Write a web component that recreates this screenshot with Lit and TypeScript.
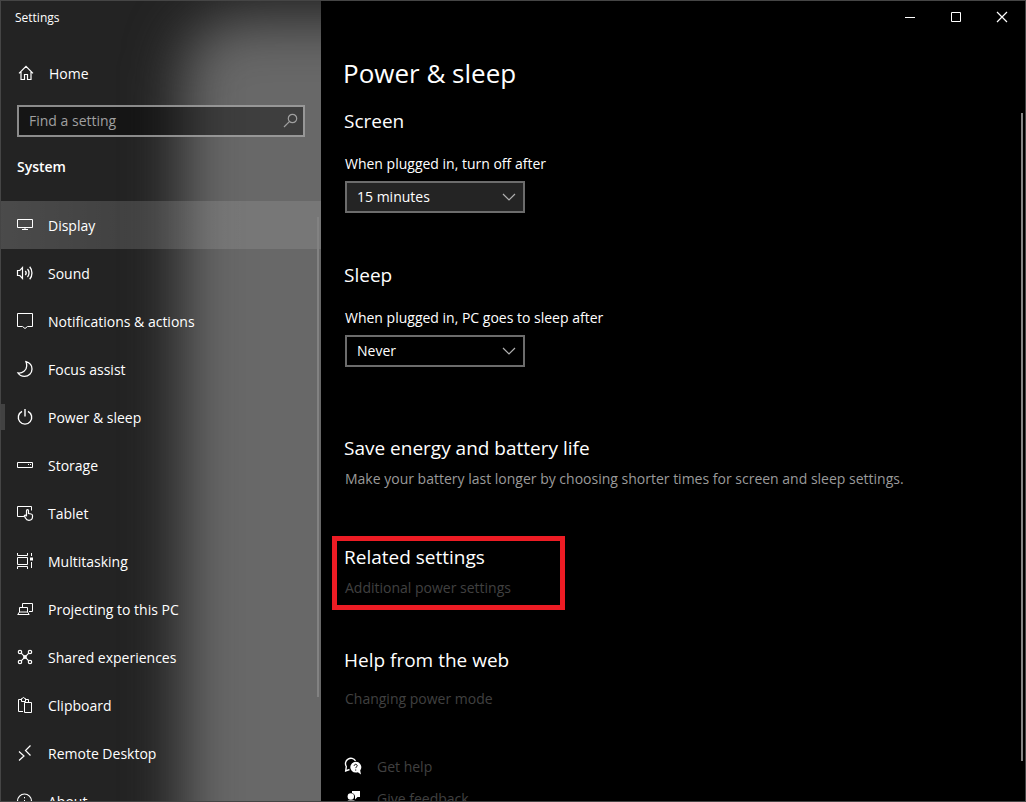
import { LitElement, html, svg, css } from "lit";
import { customElement, property, state } from "lit/decorators.js";
import { classMap } from "lit/directives/class-map.js";

const glyphs = {
  home: svg`<path stroke-width="1.200" d="M1 8.300 8 1.300l7 7M3 6.800v7.700h3.500v-5h3v5H13V6.800"/>`,
  search: svg`<circle cx="9.500" cy="5.500" r="4.200" stroke-width="1.200"/><path stroke-width="1.200" d="M6.600 8.400 1 14"/>`,
  display: svg`<path d="M.5 2.500h15v8H.5zM8 11v2M5 12.500h6"/>`,
  sound: svg`<path stroke-width="1.200" d="M.5 5.500h2.300L5.500 2.500v11L2.800 10.500H.5z"/><path stroke-width="1.300" d="M8.300 6c1 1.100 1 2.900 0 4M10.500 4c2 2.200 2 5.800 0 8M12.700 1.800c3 3.400 3 9 0 12.400"/>`,
  notifications: svg`<path d="M.5.5h15v13h-5L8 15.500l-2.500-2h-5z"/>`,
  focus: svg`<path stroke-width="1.300" d="M9 .7c3.700 1.100 6 4 6 7.300 0 4.200-3.300 7.300-7.500 7.300-2.800 0-5.200-1.200-6.500-3.300C5.500 12.500 9.700 9.300 9.700 5c0-1.600-.2-3-.7-4.300z"/>`,
  power: svg`<path stroke-width="1.400" d="M5 2.400a6.700 6.700 0 1 0 6 0M8 0v7.500"/>`,
  storage: svg`<path d="M.5 5.500h15v5H.5zM11 7.500h1M13 7.500h1"/>`,
  tablet: svg`<path d="M7 11.500H.5v-10h14v4"/><path stroke-width="1.200" d="M9.500 10.500V5.800c0-1.500 2-1.500 2 0V8.500l2.600.5c1 .2 1.400.7 1.400 1.600v1.200c0 2-1 3.500-3.500 3.500-2 0-2.900-.8-3.500-2.200L7.300 10.800c.5-1 1.700-.8 2.200.4z"/>`,
  multitasking: svg`<path d="M.5 0v2.500h10V0M.5 16v-2.500h10V16M.5 4.500h10v7H.5zM14.500 0v3M14.500 9v6"/><path d="M13 4.500h3v3h-3z" fill="currentColor" stroke="none"/>`,
  projecting: svg`<path d="M5.500 6V2.500h10v8H12M2.500 11V6.500h8V11M.7 13.500h11.500L10.500 11h-8z"/>`,
  shared: svg`<g stroke-width="1.200"><circle cx="3" cy="3" r="1.700"/><circle cx="13" cy="3" r="1.700"/><circle cx="3" cy="13" r="1.700"/><circle cx="13" cy="13" r="1.700"/><path d="m4.200 4.200 7.600 7.600M11.800 4.200l-7.600 7.600"/><circle cx="8" cy="8" r="1.300"/></g>`,
  clipboard: svg`<path d="M6 14.500H1.500v-12H4M9 2.500h2.500V5M4.500 1.500h1c0-1.400 2-1.400 2 0h1v3h-4zM7.500 5.500h7v10h-7z"/>`,
  remote: svg`<path stroke-width="1.200" d="m2 6.500 5 4.500-5 4.500M13.500.500 8.500 5.500l5 5"/>`,
  about: svg`<circle cx="7.500" cy="8" r="7" stroke-width="1.200"/><path d="M7.500 7v5M7.500 4v1.300"/>`,
  help: svg`<path stroke-width="1.400" d="M10.500 1.800A5.300 5.300 0 0 0 1.300 7.500L.7 12 4.500 10.500"/><path d="M10.700 2.800a5.400 5.400 0 1 0 0 10.800c.8 0 1.500-.1 2.200-.4l3.100 2.400-.8-4.200A5.400 5.400 0 0 0 10.700 2.800z" fill="currentColor" stroke="none"/><path d="M9.200 6.800c0-2 3-2 3 0 0 1.100-1.500 1.100-1.500 2.300M10.700 10.500v1.100" stroke="#000"/>`,
  feedback: svg`<circle cx="5.800" cy="5.500" r="3.200" fill="currentColor" stroke="none"/><path d="M7 0h8v6h-2.500L10 8.500V5.500C9.800 3.800 8.800 2.500 7 2zM3.500 9.500h5c1 0 1.500.5 1.500 1.500v5H2v-5c0-.8.7-1.500 1.500-1.500z" fill="currentColor" stroke="none"/>`,
  minimize: svg`<path d="M3 8.500h10"/>`,
  maximize: svg`<path d="M3.500 3.500h9v9h-9z"/>`,
  close: svg`<path stroke-width="1.200" d="m3 3 10 10M13 3 3 13"/>`,
  chevron: svg`<path stroke-width="1.200" d="m2 5 6 6 6-6"/>`,
};

type Glyph = keyof typeof glyphs;

@customElement("line-icon")
class LineIcon extends LitElement {
  @property() name: Glyph = "home";

  static styles = css`
    :host {
      display: block;
      flex: none;
      width: 16px;
      height: 16px;
    }
    .glyph {
      display: block;
      width: 100%;
      height: 100%;
      fill: none;
      stroke: currentColor;
      overflow: visible;
    }
  `;

  render() {
    return html`<svg class="glyph" viewBox="0 0 16 16" aria-hidden="true">${glyphs[this.name]}</svg>`;
  }
}

@customElement("settings-sidebar")
class SettingsSidebar extends LitElement {
  @state() private current = "Power & sleep";
  @state() private highlighted = "Display";

  private items: [Glyph, string][] = [
    ["display", "Display"],
    ["sound", "Sound"],
    ["notifications", "Notifications & actions"],
    ["focus", "Focus assist"],
    ["power", "Power & sleep"],
    ["storage", "Storage"],
    ["tablet", "Tablet"],
    ["multitasking", "Multitasking"],
    ["projecting", "Projecting to this PC"],
    ["shared", "Shared experiences"],
    ["clipboard", "Clipboard"],
    ["remote", "Remote Desktop"],
    ["about", "About"],
  ];

  static styles = css`
    :host {
      position: relative;
      z-index: 0;
      display: flex;
      flex-direction: column;
      min-height: 0;
      overflow: hidden;
      background: #232323;
    }
    .glow {
      position: absolute;
      z-index: -1;
      inset: 18px -140px -140px 182px;
      border-radius: 56px;
      background: #686868;
      filter: blur(28px);
    }
    .app-name {
      padding: 0 14px;
      font-size: 12px;
      line-height: 34px;
    }
    .home {
      display: flex;
      align-items: center;
      gap: 15px;
      height: 48px;
      margin-top: 15px;
      padding: 0 17px;
      color: inherit;
      text-decoration: none;
    }
    .search {
      display: flex;
      align-items: center;
      height: 32px;
      box-sizing: border-box;
      margin: 7px 16px 0;
      padding: 0 4px 0 10px;
      border: 2px solid rgba(190, 190, 190, 0.7);
      background: rgba(0, 0, 0, 0.4);
      color: #a0a0a0;
    }
    .query {
      flex: 1;
      min-width: 0;
      padding: 0;
      border: 0;
      outline: 0;
      background: none;
      color: #fff;
      font: inherit;
    }
    .query::placeholder {
      color: #a0a0a0;
      opacity: 1;
    }
    .group {
      margin: 0;
      padding: 19px 16px 23px;
      font-size: 14px;
      line-height: 22px;
      font-weight: 600;
    }
    .list {
      flex: 1;
      min-height: 0;
      margin: 0;
      padding: 0;
      list-style: none;
      overflow: auto;
      scrollbar-width: none;
    }
    .link {
      display: flex;
      align-items: center;
      gap: 15px;
      height: 48px;
      box-sizing: border-box;
      padding: 2px 12px 0;
      border-left: 4px solid transparent;
      color: inherit;
      text-decoration: none;
      white-space: nowrap;
    }
    .home line-icon,
    .link line-icon {
      margin-bottom: 2px;
    }
    .link.current {
      border-image: linear-gradient(transparent 25%, #424242 25% 75%, transparent 75%) 1;
      border-image-width: 0 0 0 4px;
    }
    .link.highlighted {
      background: linear-gradient(90deg, rgba(255, 255, 255, 0.18), rgba(255, 255, 255, 0.1) 75%);
      background-clip: border-box;
      background-origin: border-box;
    }
    .thumb {
      position: absolute;
      right: 2px;
      top: 27%;
      bottom: 13%;
      width: 2px;
      background: #828282;
    }
  `;

  render() {
    return html`
      <div class="glow"></div>
      <div class="app-name">Settings</div>
      <a class="home" href="#home"><line-icon name="home"></line-icon>Home</a>
      <label class="search">
        <input class="query" type="text" placeholder="Find a setting" aria-label="Find a setting" />
        <line-icon name="search"></line-icon>
      </label>
      <h2 class="group">System</h2>
      <ul class="list">
        ${this.items.map(
          ([icon, label]) => html`<li>
            <a
              href="#${icon}"
              class=${classMap({
                link: true,
                current: label === this.current,
                highlighted: label === this.highlighted,
              })}
              @click=${() => (this.current = label)}
              @mouseenter=${() => (this.highlighted = label)}
              ><line-icon name=${icon}></line-icon>${label}</a
            >
          </li>`
        )}
      </ul>
      <div class="thumb"></div>
    `;
  }
}

@customElement("power-page")
class PowerPage extends LitElement {
  static styles = css`
    :host {
      position: relative;
      display: flex;
      flex-direction: column;
      min-width: 0;
      min-height: 0;
      background: #000;
    }
    .caption {
      display: flex;
      justify-content: flex-end;
      flex: none;
    }
    .window-button {
      display: grid;
      place-items: center;
      width: 46px;
      height: 32px;
      padding: 0;
      border: 0;
      background: none;
      color: #fff;
    }
    .title {
      flex: none;
      margin: 20px 0 0;
      padding: 0 22px;
      font-size: 26px;
      line-height: 40px;
      font-weight: 400;
    }
    .content {
      flex: 1;
      min-height: 0;
      padding: 16px 24px 0 23px;
      overflow: auto;
      scrollbar-width: none;
    }
    .section {
      margin-bottom: 46px;
    }
    .section.picking {
      margin-bottom: 50px;
    }
    .section.last {
      margin-bottom: 69px;
    }
    .heading {
      margin: 0;
      font-size: 19px;
      line-height: 24px;
      font-weight: 400;
    }
    .label {
      display: block;
      margin: 20px 0 0 1px;
      line-height: 22px;
    }
    .picker {
      position: relative;
      width: 180px;
      margin: 6px 0 0 1px;
    }
    .select {
      appearance: none;
      display: block;
      width: 100%;
      height: 32px;
      padding: 0 32px 0 10px;
      border: 2px solid #6c6c6c;
      border-radius: 0;
      background: #000;
      color: #fff;
      font: inherit;
    }
    .select.active {
      background: #242424;
    }
    .arrow {
      position: absolute;
      right: 8px;
      top: 8px;
      color: #b0b0b0;
      pointer-events: none;
    }
    .note {
      margin: 8px 0 0 1px;
      line-height: 22px;
      color: #9a9a9a;
    }
    .link {
      margin-left: 1px;
      color: #404040;
      line-height: 22px;
      text-decoration: none;
    }
    .callout {
      width: 233px;
      box-sizing: border-box;
      margin: 0 0 38px -12px;
      padding: 4px 7px;
      border: 5px solid #ed1c24;
    }
    .callout .link,
    .web .link {
      display: block;
    }
    .callout .link {
      margin-top: 8px;
      margin-bottom: 2px;
    }
    .web .link {
      margin-top: 16px;
    }
    .section.web {
      margin-bottom: 41px;
    }
    .support {
      display: flex;
      align-items: center;
      gap: 15px;
      height: 32px;
      margin-left: 1px;
    }
    .thumb {
      position: absolute;
      right: 2px;
      top: 14%;
      bottom: 5%;
      width: 2px;
      background: #858585;
    }
  `;

  private renderPicker(id: string, title: string, label: string, value: string, active: boolean) {
    const choices = ["5 minutes", "15 minutes", "30 minutes", "1 hour", "Never"];
    return html`<section class=${classMap({ section: true, picking: active, last: !active })}>
      <h2 class="heading">${title}</h2>
      <label class="label" for=${id}>${label}</label>
      <div class="picker">
        <select id=${id} class=${classMap({ select: true, active })}>
          ${choices.map((c) => html`<option ?selected=${c === value}>${c}</option>`)}
        </select>
        <line-icon class="arrow" name="chevron"></line-icon>
      </div>
    </section>`;
  }

  render() {
    return html`
      <div class="caption">
        <button class="window-button" aria-label="Minimize"><line-icon name="minimize"></line-icon></button>
        <button class="window-button" aria-label="Maximize"><line-icon name="maximize"></line-icon></button>
        <button class="window-button" aria-label="Close"><line-icon name="close"></line-icon></button>
      </div>
      <h1 class="title">Power &amp; sleep</h1>
      <div class="content">
        ${this.renderPicker("screen", "Screen", "When plugged in, turn off after", "15 minutes", true)}
        ${this.renderPicker("sleep", "Sleep", "When plugged in, PC goes to sleep after", "Never", false)}
        <section class="section">
          <h2 class="heading">Save energy and battery life</h2>
          <p class="note">
            Make your battery last longer by choosing shorter times for screen and sleep settings.
          </p>
        </section>
        <section class="callout">
          <h2 class="heading">Related settings</h2>
          <a class="link" href="#additional">Additional power settings</a>
        </section>
        <section class="section web">
          <h2 class="heading">Help from the web</h2>
          <a class="link" href="#mode">Changing power mode</a>
        </section>
        <div class="support"><line-icon name="help"></line-icon><a class="link" href="#help">Get help</a></div>
        <div class="support">
          <line-icon name="feedback"></line-icon><a class="link" href="#feedback">Give feedback</a>
        </div>
      </div>
      <div class="thumb"></div>
    `;
  }
}

@customElement("app-root")
class AppRoot extends LitElement {
  static styles = css`
    :host {
      display: grid;
      grid-template-columns: 320px minmax(0, 1fr);
      grid-template-rows: minmax(0, 1fr);
      height: 100vh;
      box-sizing: border-box;
      border: 1px solid #454545;
      background: #000;
      color: #fff;
      font-family: "Open Sans", "Noto Sans", sans-serif;
      font-size: 14px;
      line-height: 20px;
    }
  `;

  render() {
    return html`<settings-sidebar></settings-sidebar><power-page></power-page>`;
  }
}
